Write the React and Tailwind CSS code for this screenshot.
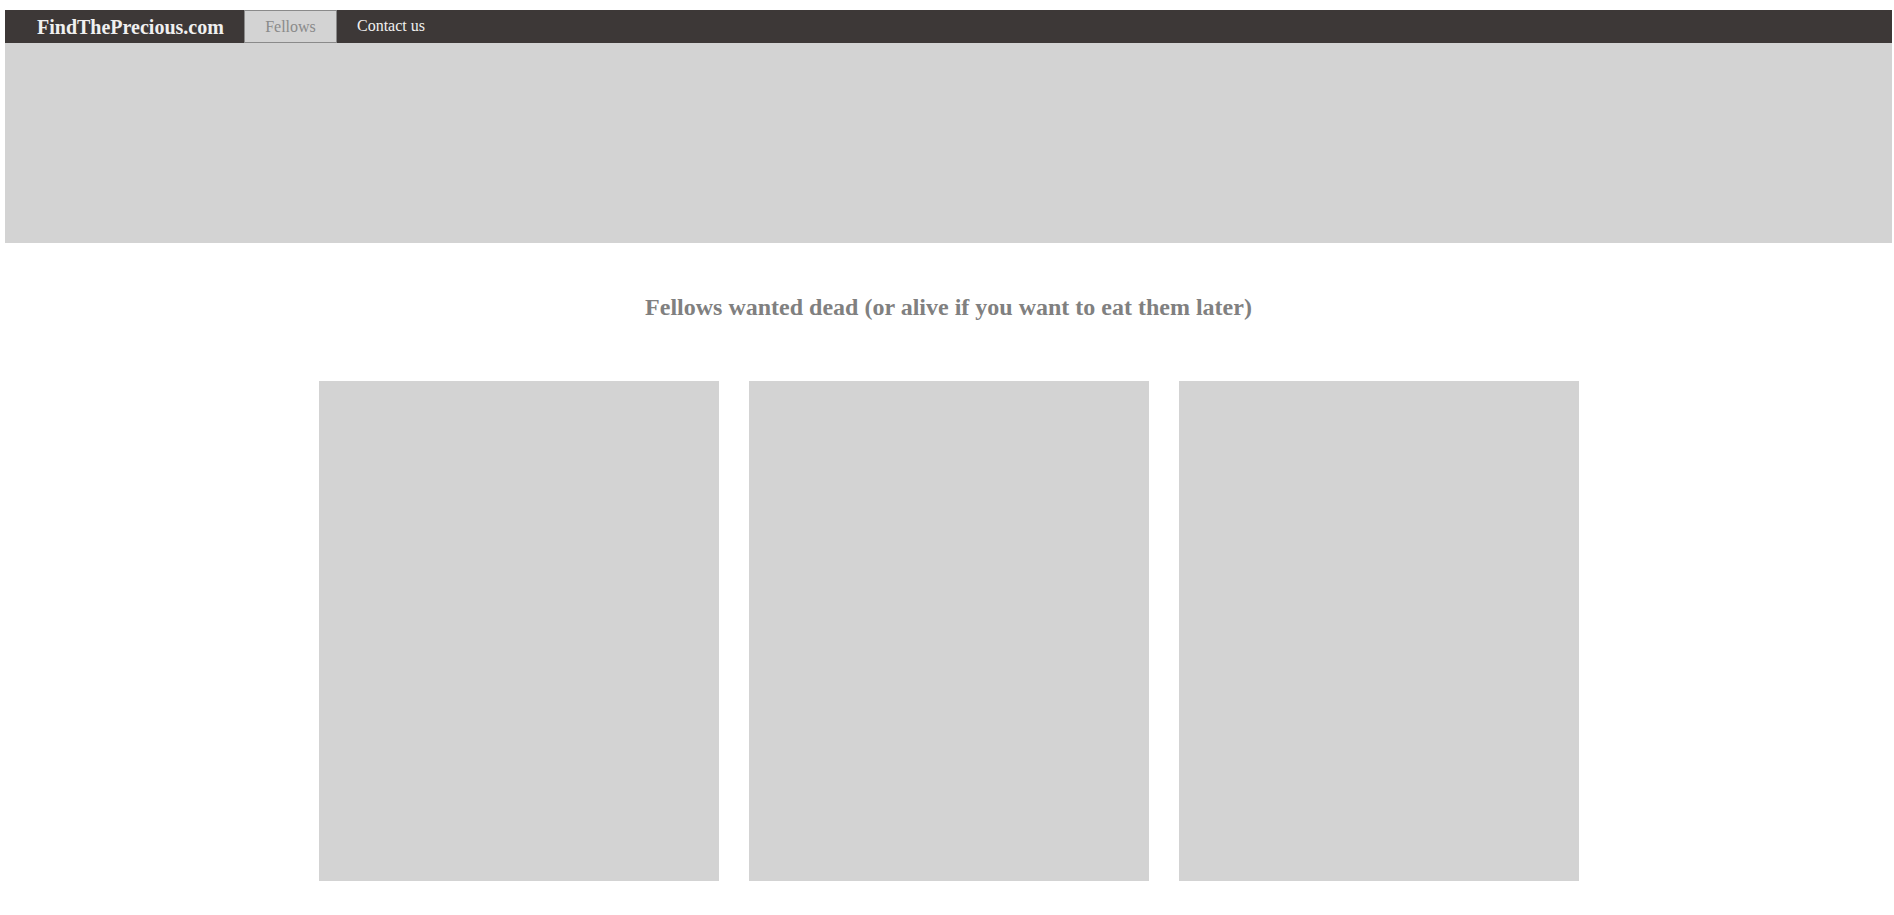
export default function App() {
  return (
    <div className="min-h-[915px] bg-white pl-[5px] pr-[2px] pt-[10px]" style={{ fontFamily: '"Liberation Serif", "Times New Roman", serif' }}>
      <nav className="flex h-[33px] items-stretch bg-[#3d3837]">
        <a className="flex w-[239px] items-center pl-[32px] text-[20px] font-bold text-[#f0f0f0]">FindThePrecious.com</a>
        <a className="flex w-[93px] items-center justify-center border border-[#8a8a8a] bg-[#d3d3d3] text-[16px] text-[#8a8a8a]">Fellows</a>
        <a className="flex items-center px-[20px] pb-[2px] text-[16px] text-[#f0f0f0]">Contact us</a>
      </nav>
      <div className="h-[200px] bg-[#d3d3d3]" />
      <h2 className="mt-[46px] text-center text-[24px] font-bold text-[#808080]">
        Fellows wanted dead (or alive if you want to eat them later)
      </h2>
      <div className="mt-[56px] flex justify-center gap-[30px] pl-[1px]">
        <div className="h-[500px] w-[400px] bg-[#d3d3d3]" />
        <div className="h-[500px] w-[400px] bg-[#d3d3d3]" />
        <div className="h-[500px] w-[400px] bg-[#d3d3d3]" />
      </div>
    </div>
  );
}
